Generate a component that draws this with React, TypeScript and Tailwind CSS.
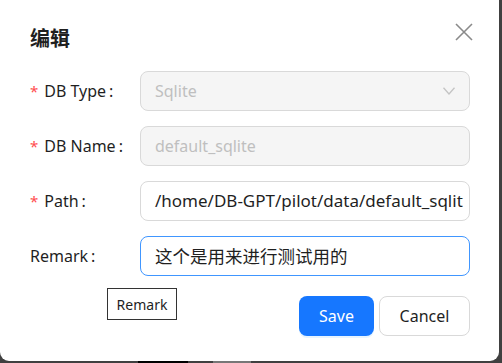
const FONT = { fontFamily: '"Noto Sans", "Noto Sans CJK SC", sans-serif' };

interface FieldProps {
  label: string;
  required?: boolean;
  children: React.ReactNode;
}

const Field = ({ label, required, children }: FieldProps) => (
  <div className="flex items-center h-[40px]">
    <div className="w-[110px] shrink-0 flex items-center text-[16px] text-[#1f1f1f]">
      {required && <span className="text-[#ff4d4f] mr-[6px] text-[15px]">*</span>}
      <span>{label}</span>
      <span className="ml-[3px]">:</span>
    </div>
    <div className="flex-1 min-w-0">{children}</div>
  </div>
);

const inputBase =
  "h-[40px] w-full rounded-[8px] border px-[14px] flex items-center text-[16px] whitespace-nowrap overflow-hidden";

export default function App() {
  return (
    <div className="w-[502px] h-[363px] bg-[#404040] overflow-hidden relative" style={FONT}>
      <div className="w-[499px] h-[361px] bg-white rounded-b-[9px] relative pl-[30px] pr-[29px] pt-[25px]">
        <div className="flex items-start justify-between">
          <h2 className="text-[20px] font-bold text-[#1f1f1f] leading-[28px]">编辑</h2>
          {/* close */}
          <svg width="18" height="18" viewBox="0 0 18 18" className="-mr-[3px] -mt-[2px]">
            <path d="M1 1 L17 17 M17 1 L1 17" stroke="#8a8a8a" strokeWidth="1.6" fill="none" />
          </svg>
        </div>

        <div className="mt-[18px] flex flex-col gap-[15px]">
          <Field label="DB Type" required>
            <div className={`${inputBase} bg-[#f5f5f5] border-[#d9d9d9] text-[#bfbfbf] justify-between`}>
              <span>Sqlite</span>
              <svg width="12" height="8" viewBox="0 0 12 8">
                <path d="M0.5 0.8 L6 7 L11.5 0.8" stroke="#c4c4c4" strokeWidth="1.3" fill="none" />
              </svg>
            </div>
          </Field>
          <Field label="DB Name" required>
            <div className={`${inputBase} bg-[#f5f5f5] border-[#d9d9d9] text-[#bfbfbf]`}>default_sqlite</div>
          </Field>
          <Field label="Path" required>
            <div className={`${inputBase} bg-white border-[#d9d9d9] text-[#1f1f1f] text-[17px]`}>
              /home/DB-GPT/pilot/data/default_sqlit
            </div>
          </Field>
          <Field label="Remark">
            <div className={`${inputBase} bg-white border-[#4096ff] text-[#1f1f1f] text-[17.5px]`}>
              这个是用来进行测试用的
            </div>
          </Field>
        </div>

        <div className="mt-[20px] flex justify-end gap-[5px]">
          <button className="w-[75px] h-[40px] rounded-[8px] bg-[#1677ff] text-white text-[16px] shadow-[0_2px_0_rgba(5,145,255,0.1)]">
            Save
          </button>
          <button className="w-[91px] h-[40px] rounded-[8px] bg-white border border-[#d9d9d9] text-[#1f1f1f] text-[16px]">
            Cancel
          </button>
        </div>

        <div className="absolute left-[107px] top-[288px] w-[70px] h-[32px] border border-[#333] bg-white flex items-center justify-center text-[14px] text-[#1f1f1f]">
          Remark
        </div>
      </div>
      <div className="absolute left-[138px] top-[361px] w-[50px] h-[2px] bg-black" />
      <div className="absolute left-[213px] top-[361px] w-[38px] h-[2px] bg-[#777]" />
    </div>
  );
}
